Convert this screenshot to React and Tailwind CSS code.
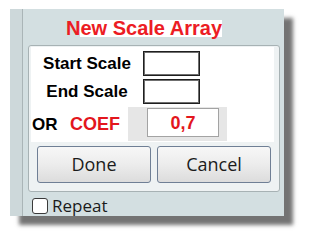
import React from 'react';

const labelFont = { fontFamily: '"Liberation Sans", Arial, sans-serif' };
const uiFont = { fontFamily: '"Open Sans", "Noto Sans", sans-serif' };

const Field = ({ label }) => (
  <div className="flex h-[25px] items-center">
    <div className="w-[112px] text-center text-[17px] font-bold leading-none text-black" style={labelFont}>
      {label}
    </div>
    <div className="h-[25px] w-[57px] border border-[#1f1f1f] bg-white shadow-[inset_0_0_0_1px_#6f6f6f]" />
  </div>
);

const Button = ({ children }) => (
  <button
    className="flex h-[37px] w-[114px] items-center justify-center rounded-[3px] border border-[#6f7f95] bg-gradient-to-b from-[#f7f7f7] via-[#ececec] to-[#dcdcdc] text-[18px] text-[#1b1b1b]"
    style={uiFont}
  >
    {children}
  </button>
);

export default function App() {
  return (
    <div className="h-[243px] w-[310px] overflow-hidden bg-white pl-[10px] pt-[9px]">
      <div className="flex h-[207px] w-[274px] bg-[#d3dfe1] shadow-[9px_9px_4px_rgba(0,0,0,0.55)]">
        {/* left strip */}
        <div className="w-[13px] border-r border-[#aab5b7] bg-[#cdd8da]" />

        <div className="flex flex-1 flex-col">
          {/* title */}
          <div className="flex h-[36px] items-start pl-[43px] pt-[11px] text-[20px] font-bold leading-[17px] text-[#ec1c24]" style={labelFont}>
            <span>N</span>
            <span className="bg-white">ew Scale Array</span>
          </div>

          {/* inner box */}
          <div className="ml-[5px] flex h-[147px] w-[252px] flex-col rounded-[3px] border border-[#a7b2b4] bg-[#eef2f3] pt-[1px]">
            <div className="ml-[2px] flex h-[95px] w-[243px] flex-col bg-white pt-[4px]">
              <Field label="Start Scale" />
              <div className="mt-[3px]">
                <Field label="End Scale" />
              </div>
              <div className="mt-[3px] flex h-[34px] items-center">
                <div className="ml-[1px] w-[30px] text-[17px] font-bold leading-none text-black" style={labelFont}>
                  OR
                </div>
                <div className="flex h-[34px] w-[66px] items-center justify-center bg-white text-[18px] font-bold leading-none text-[#e3161d]" style={labelFont}>
                  COEF
                </div>
                <div className="flex h-[34px] w-[99px] items-start bg-[#e6e6e6] pl-[19px] pt-[1px]">
                  <div className="flex h-[29px] w-[72px] items-center justify-center border border-[#a3a3a3] bg-white text-[18px] font-bold leading-none text-[#e3161d]" style={labelFont}>
                    0,7
                  </div>
                </div>
              </div>
            </div>

            <div className="ml-[8px] mt-[4px] flex gap-[6px]">
              <Button>Done</Button>
              <Button>Cancel</Button>
            </div>
          </div>

          {/* repeat */}
          <div className="ml-[9px] mt-[5px] flex items-center gap-[4px]">
            <div className="h-[16px] w-[16px] rounded-[3px] border border-[#3a3a3a] bg-white" />
            <span className="text-[17px] leading-none text-[#1b1b1b]" style={uiFont}>
              Repeat
            </span>
          </div>
        </div>
      </div>
    </div>
  );
}
